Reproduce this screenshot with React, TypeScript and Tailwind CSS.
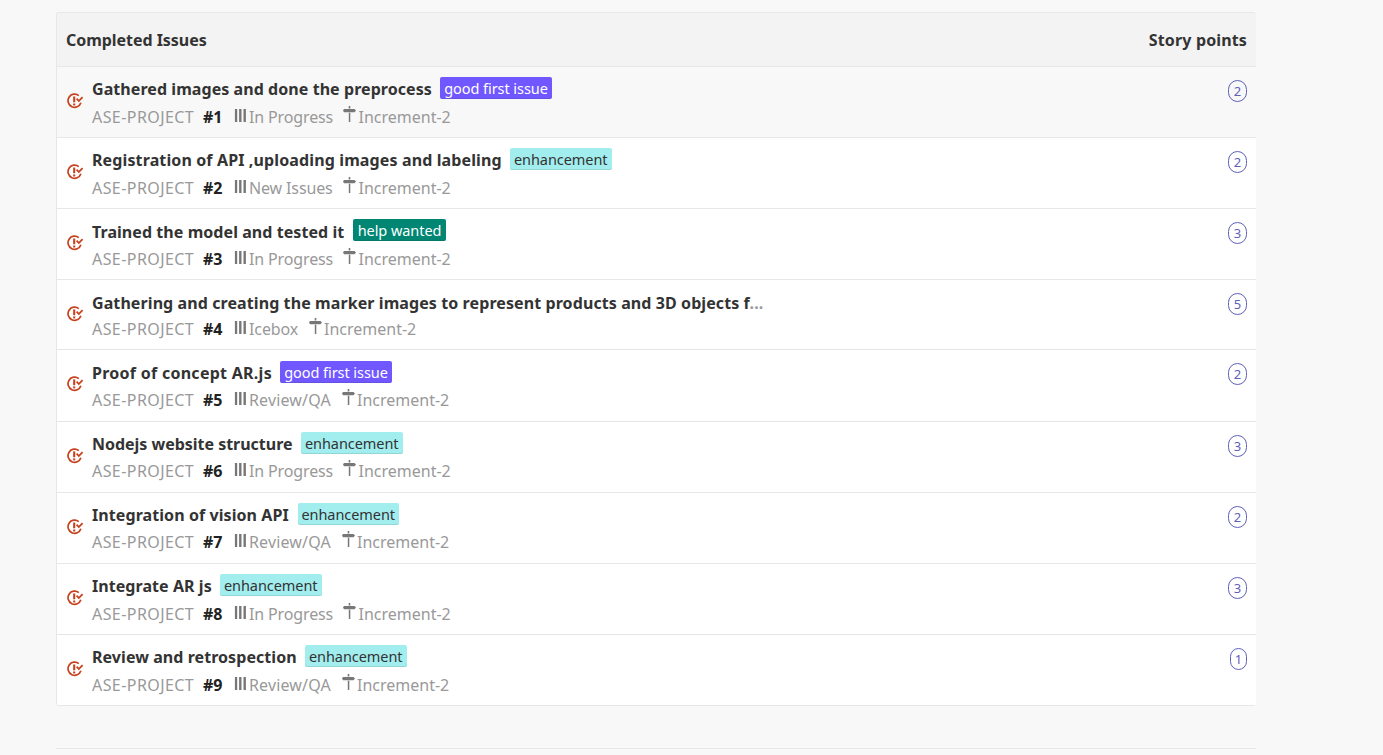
type Label = 'good first issue' | 'enhancement' | 'help wanted';

interface Issue {
  title: string;
  titleClass: string;
  rowClass: string;
  contentClass: string;
  metaClass: string;
  label?: Label;
  clipped?: boolean;
  pipeline: string;
  pipelineClass: string;
  points: number;
}

const issues: Issue[] = [
  { title: 'Gathered images and done the preprocess', titleClass: 'w-[348px] tracking-[0.065px]', rowClass: 'h-[71px] bg-[#f8f8f8]', contentClass: 'pt-[10px]', metaClass: 'mt-[7px]', label: 'good first issue', pipeline: 'In Progress', pipelineClass: 'w-[109px] tracking-[-0.14px]', points: 2 },
  { title: 'Registration of API ,uploading images and labeling', titleClass: 'w-[418px] tracking-[0.125px]', rowClass: 'h-[71px] bg-white', contentClass: 'pt-[10px]', metaClass: 'mt-[7px]', label: 'enhancement', pipeline: 'New Issues', pipelineClass: 'w-[109px] tracking-[-0.13px]', points: 2 },
  { title: 'Trained the model and tested it', titleClass: 'w-[261px] tracking-[0.06px]', rowClass: 'h-[71px] bg-white', contentClass: 'pt-[11px]', metaClass: 'mt-[6px]', label: 'help wanted', pipeline: 'In Progress', pipelineClass: 'w-[109px] tracking-[-0.14px]', points: 3 },
  { title: 'Gathering and creating the marker images to represent products and 3D objects f', titleClass: 'w-[680px] tracking-[0.09px]', rowClass: 'h-[70px] bg-white', contentClass: 'pt-[11px]', metaClass: 'mt-[5px]', clipped: true, pipeline: 'Icebox', pipelineClass: 'w-[74.5px] tracking-[-0.1px]', points: 5 },
  { title: 'Proof of concept AR.js', titleClass: 'w-[188px] tracking-[0.27px]', rowClass: 'h-[72px] bg-white', contentClass: 'pt-[11px]', metaClass: 'mt-[6px]', label: 'good first issue', pipeline: 'Review/QA', pipelineClass: 'w-[107.5px] tracking-[0.15px]', points: 2 },
  { title: 'Nodejs website structure', titleClass: 'w-[209px] tracking-[-0.02px]', rowClass: 'h-[71px] bg-white', contentClass: 'pt-[10px]', metaClass: 'mt-[6px]', label: 'enhancement', pipeline: 'In Progress', pipelineClass: 'w-[109px] tracking-[-0.14px]', points: 3 },
  { title: 'Integration of vision API', titleClass: 'w-[205.5px] tracking-[0.08px]', rowClass: 'h-[71px] bg-white', contentClass: 'pt-[10px]', metaClass: 'mt-[6px]', label: 'enhancement', pipeline: 'Review/QA', pipelineClass: 'w-[107.5px] tracking-[0.15px]', points: 2 },
  { title: 'Integrate AR js', titleClass: 'w-[128px] tracking-[0.06px]', rowClass: 'h-[71px] bg-white', contentClass: 'pt-[10px]', metaClass: 'mt-[7px]', label: 'enhancement', pipeline: 'In Progress', pipelineClass: 'w-[109px] tracking-[-0.14px]', points: 3 },
  { title: 'Review and retrospection', titleClass: 'w-[213px] tracking-[0.06px]', rowClass: 'h-[71px] bg-white', contentClass: 'pt-[10px]', metaClass: 'mt-[7px]', label: 'enhancement', pipeline: 'Review/QA', pipelineClass: 'w-[107.5px] tracking-[0.15px]', points: 1 },
];

const labelClasses: Record<Label, string> = {
  'good first issue': 'w-[112px] bg-[#7057ff] text-white tracking-[-0.06px]',
  enhancement: 'w-[101.5px] bg-[#a2eeef] text-[#333] tracking-[-0.06px]',
  'help wanted': '-mt-px w-[93px] bg-[#008672] text-white tracking-[-0.06px]',
};

function ClosedIcon() {
  return (
    <svg className="h-4 w-4 shrink-0" viewBox="0 0 16 16" fill="none" stroke="#c6421f">
      <path d="M11.8 2.6A6.6 6.6 0 1 0 13.9 9.8" strokeWidth="1.7" />
      <path d="M7.2 3.4V9.2" strokeWidth="2.1" />
      <path d="M7.2 10.4v2" strokeWidth="2.1" />
      <path d="M9.6 5.7l2.2 2.3 3.8-4" strokeWidth="1.8" />
    </svg>
  );
}

function PipelineIcon() {
  return (
    <svg className="mt-[3px] h-[13px] w-[15px] shrink-0" viewBox="0 0 15 13" fill="#777">
      <path d="M.9 0h2.3v13H.9zM5.1 0h2.4v13H5.1zM9.5 0h2.4v13H9.5z" />
    </svg>
  );
}

function MilestoneIcon() {
  return (
    <svg className="h-[16px] w-[15.5px] shrink-0" viewBox="0 0 15.5 16" fill="#777">
      <path d="M5.7 0h1.6v2.1H5.7zM1 2.9h4.7v-.4h1.6v.4h4.2L13 4.6l-1.5 1.7H1L0 4.6zM5.8 6.8h1.5V16H5.8z" />
    </svg>
  );
}

function IssueRow({ issue }: { issue: Issue }) {
  return (
    <li className={`flex border-b border-[#e7e7e7] pr-[9px] pl-[10px] ${issue.rowClass}`}>
      <div className="w-[25px] shrink-0 pt-[26px]">
        <ClosedIcon />
      </div>
      <div className={`min-w-0 flex-1 ${issue.contentClass}`}>
        <div className="flex h-[22px]">
          <h3 className={`shrink-0 text-[16px] leading-[24px] font-bold whitespace-nowrap text-[#333] ${issue.titleClass}`}>
            {issue.title}
            {issue.clipped && <span className="text-[#999]">...</span>}
          </h3>
          {issue.label && (
            <span className={`h-[22px] rounded-[2px] text-center text-[14.5px] leading-[22px] whitespace-nowrap shadow-[inset_0_-1px_0_rgba(27,31,35,0.12)] ${labelClasses[issue.label]}`}>
              {issue.label}
            </span>
          )}
        </div>
        <div className={`flex text-[16px] leading-[22px] whitespace-nowrap text-[#999] ${issue.metaClass}`}>
          <span className="w-[111px] tracking-[0.43px]">ASE-PROJECT</span>
          <span className="w-[31px] font-bold text-[#222]">#{issues.indexOf(issue) + 1}</span>
          <span className={`flex ${issue.pipelineClass}`}>
            <PipelineIcon />
            {issue.pipeline}
          </span>
          <span className="flex">
            <MilestoneIcon />
            Increment-2
          </span>
        </div>
      </div>
      <div className="pt-[13px]">
        <span className={`flex h-[22px] items-center justify-center rounded-full border border-[#5e60ba] text-[13px] leading-none text-[#5e60ba] ${issue.points === 1 ? 'w-[17px]' : 'w-[19px]'}`}>
          {issue.points}
        </span>
      </div>
    </li>
  );
}

export default function App() {
  return (
    <main className="h-[755px] overflow-hidden bg-[#f8f8f8] pt-[12px] pl-[56px] font-['Noto_Sans','Open_Sans',sans-serif]">
      <section className="w-[1200px] overflow-hidden rounded-[3px] border-t border-l border-[#e7e7e7]">
        <header className="flex h-[54px] items-center justify-between border-b border-[#e7e7e7] bg-[#f3f3f3] pr-[9px] pl-[9px] text-[16px] font-bold text-[#333]">
          <h2 className="tracking-[-0.04px]">Completed Issues</h2>
          <span className="tracking-[0.14px]">Story points</span>
        </header>
        <ul>
          {issues.map((issue) => (
            <IssueRow key={issue.title} issue={issue} />
          ))}
        </ul>
      </section>
      <div className="mt-[42px] w-[1200px] border-t border-[#e7e7e7]" />
    </main>
  );
}
